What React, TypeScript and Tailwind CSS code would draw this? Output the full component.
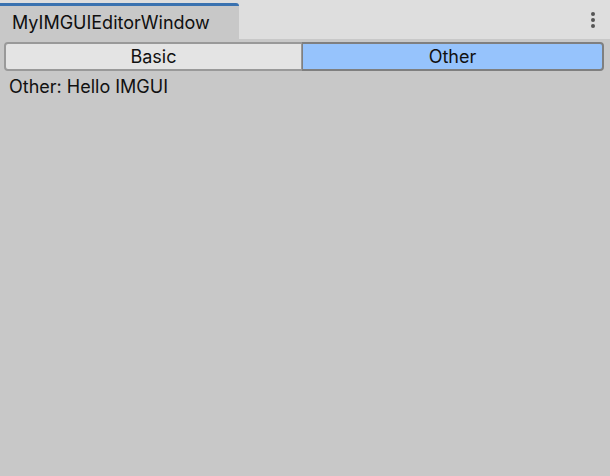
export default function App() {
  return (
    <div
      className="w-[610px] h-[476px] bg-[#c8c8c8] flex flex-col overflow-hidden"
      style={{ fontFamily: "Inter, 'Noto Sans', sans-serif" }}
    >
      <div className="h-[39px] bg-[#dedede] flex items-end shrink-0">
        <div className="w-[239px] h-[36px] bg-[#c8c8c8] border-t-[3px] border-[#3a72b0] rounded-tr-[3px] flex items-center pl-[12px] text-[18px] text-[#0f0f0f]">
          MyIMGUIEditorWindow
        </div>
        <div className="flex-1 h-full flex items-center justify-end pr-[15px]">
          <div className="flex flex-col gap-[2px]">
            <div className="w-[4px] h-[4px] rounded-full bg-[#555]" />
            <div className="w-[4px] h-[4px] rounded-full bg-[#555]" />
            <div className="w-[4px] h-[4px] rounded-full bg-[#555]" />
          </div>
        </div>
      </div>
      <div className="pl-[4px] pr-[6px] pt-[3px]">
        <div className="flex h-[29px] text-[18px] text-[#111]">
          <div className="w-[298px] bg-[#e4e4e4] border-2 border-r border-[#999] rounded-l-[4px] flex items-center justify-center">
            Basic
          </div>
          <div className="flex-1 bg-[#96c3fc] border-2 border-l border-[#7f7f7f] rounded-r-[4px] flex items-center justify-center">
            Other
          </div>
        </div>
      </div>
      <div className="pl-[9px] pt-[4px] text-[18px] text-[#111] leading-[24px]">
        Other: Hello IMGUI
      </div>
    </div>
  );
}
